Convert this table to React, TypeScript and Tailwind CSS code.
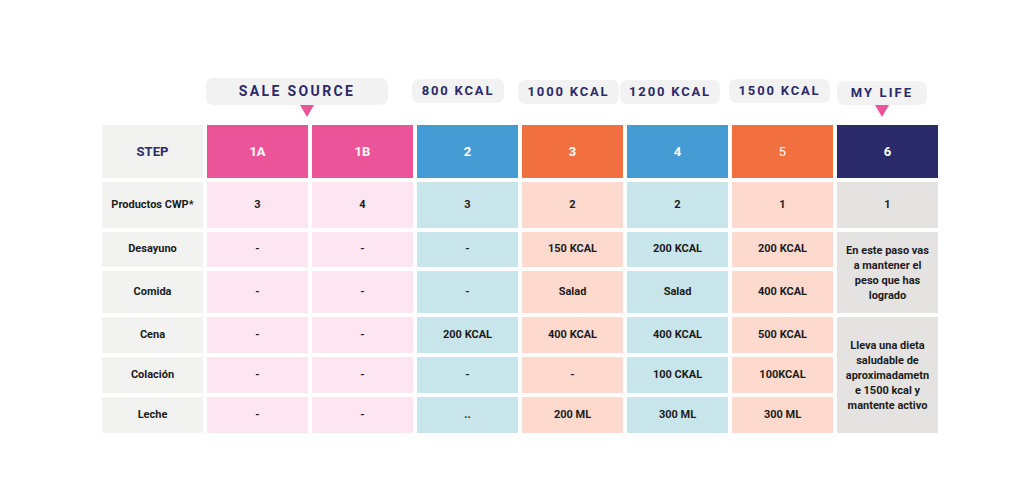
import React from 'react';

type Tone = 'pink' | 'blue' | 'orange';

const headerBg: Record<Tone, string> = {
  pink: 'bg-[#ec5499]',
  blue: 'bg-[#459bd4]',
  orange: 'bg-[#f26f3f]',
};

const bodyBg: Record<Tone, string> = {
  pink: 'bg-[#fde6f2]',
  blue: 'bg-[#c7e5ea]',
  orange: 'bg-[#fdd9ce]',
};

const columns: { step: string; tone: Tone; light?: boolean; values: string[] }[] = [
  { step: '1A', tone: 'pink', values: ['3', '-', '-', '-', '-', '-'] },
  { step: '1B', tone: 'pink', values: ['4', '-', '-', '-', '-', '-'] },
  { step: '2', tone: 'blue', values: ['3', '-', '-', '200 KCAL', '-', '..'] },
  { step: '3', tone: 'orange', values: ['2', '150 KCAL', 'Salad', '400 KCAL', '-', '200 ML'] },
  { step: '4', tone: 'blue', values: ['2', '200 KCAL', 'Salad', '400 KCAL', '100 CKAL', '300 ML'] },
  { step: '5', tone: 'orange', light: true, values: ['1', '200 KCAL', '400 KCAL', '500 KCAL', '100KCAL', '300 ML'] },
];

const rowLabels = ['Productos CWP*', 'Desayuno', 'Comida', 'Cena', 'Colación', 'Leche'];

const Pointer = ({ className }: { className: string }) => (
  <svg width="14" height="12" viewBox="0 0 14 12" className={className}>
    <path d="M0 0 L14 0 L7 12 Z" fill="#ec5499" />
  </svg>
);

const Badge = ({ label, className, pointer }: { label: string; className: string; pointer?: string }) => (
  <div
    className={`relative flex items-center justify-center rounded-[7px] bg-[#f2f2f2] font-bold text-[#2b2a6a] ${className}`}
  >
    {label}
    {pointer && <Pointer className={`absolute top-full ${pointer}`} />}
  </div>
);

export default function App() {
  return (
    <div className="h-[480px] w-[1024px] bg-white font-['Roboto',sans-serif]">
      <div className="flex items-start pl-[206px] pt-[78px]">
        <Badge label="SALE SOURCE" className="h-[27px] w-[182px] text-[14px] tracking-[0.17em]" pointer="left-[94px]" />
        <Badge label="800 KCAL" className="ml-[24px] mt-[1px] h-[24px] w-[92px] text-[13px] tracking-[0.14em]" />
        <Badge label="1000 KCAL" className="ml-[14px] mt-[2px] h-[24px] w-[101px] text-[13px] tracking-[0.14em]" />
        <Badge label="1200 KCAL" className="ml-[1px] mt-[2px] h-[24px] w-[100px] text-[13px] tracking-[0.14em]" />
        <Badge label="1500 KCAL" className="ml-[9px] mt-[1px] h-[24px] w-[101px] text-[13px] tracking-[0.14em]" />
        <Badge label="MY LIFE" className="ml-[7px] mt-[3px] h-[24px] w-[90px] text-[13px] tracking-[0.16em]" pointer="left-[38px]" />
      </div>

      <div className="ml-[102px] mt-[20px] grid w-[836px] grid-cols-[repeat(8,101px)] grid-rows-[53px_46px_35px_42px_36px_36px_36px] gap-x-[4px] gap-y-[4px] text-[11px] font-bold text-[#1c1c1c]">
        <div className="flex items-center justify-center bg-[#f2f2f1] text-[13px] text-[#2b2a6a]">STEP</div>
        {columns.map((c) => (
          <div
            key={c.step}
            className={`flex items-center justify-center text-[13px] text-white ${headerBg[c.tone]} ${c.light ? 'font-normal' : ''}`}
          >
            {c.step}
          </div>
        ))}
        <div className="flex items-center justify-center bg-[#2b2a6a] text-[13px] text-white">6</div>

        {rowLabels.map((label, r) => (
          <React.Fragment key={label}>
            <div className="flex items-center justify-center bg-[#f2f2f1]">{label}</div>
            {columns.map((c) => (
              <div key={c.step} className={`flex items-center justify-center ${bodyBg[c.tone]}`}>
                {c.values[r]}
              </div>
            ))}
            {r === 0 && <div className="flex items-center justify-center bg-[#e4e3e2]">1</div>}
            {r === 1 && (
              <div className="row-span-2 flex items-center justify-center bg-[#e4e3e2] px-[8px] text-center leading-[15px]">
                En este paso vas a mantener el peso que has logrado
              </div>
            )}
            {r === 3 && (
              <div className="row-span-3 flex items-center justify-center bg-[#e4e3e2] px-[6px] text-center leading-[15px]">
                Lleva una dieta saludable de aproximadametn e 1500 kcal y mantente activo
              </div>
            )}
          </React.Fragment>
        ))}
      </div>
    </div>
  );
}
